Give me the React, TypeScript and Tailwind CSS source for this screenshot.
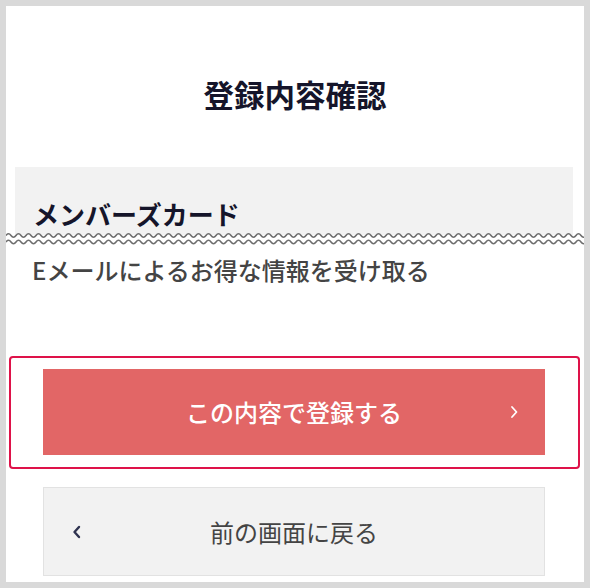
import React from 'react';

const WAVE_W = 578;

// 波線: 周期10px、振幅約3px
function wavePath(y: number, amp: number, period: number): string {
  const half = period / 2;
  let d = `M0 ${y} Q ${half / 2} ${y - amp} ${half} ${y}`;
  for (let x = half * 2; x <= WAVE_W + period; x += half) {
    d += ` T ${x} ${y}`;
  }
  return d;
}

function Wave() {
  const top = wavePath(6.5, 3.4, 10);
  const bottom = wavePath(13, 3.4, 10);
  return (
    <svg width={WAVE_W} height={20} viewBox={`0 0 ${WAVE_W} 20`} className="block -mt-[6px]" aria-hidden="true">
      <path d={`${top} L ${WAVE_W + 10} 20 L 0 20 Z`} fill="#ffffff" />
      <path d={top} fill="none" stroke="#6e6e6e" strokeWidth={1.6} />
      <path d={bottom} fill="none" stroke="#6e6e6e" strokeWidth={1.6} />
    </svg>
  );
}

function ChevronRight() {
  return (
    <svg width="10" height="14" viewBox="0 0 10 14" aria-hidden="true">
      <polyline points="3,2 7.5,7 3,12" fill="none" stroke="#ffffff" strokeWidth={1.8} strokeLinecap="round" strokeLinejoin="round" />
    </svg>
  );
}

function ChevronLeft() {
  return (
    <svg width="10" height="14" viewBox="0 0 10 14" aria-hidden="true">
      <polyline points="7,2 2.5,7 7,12" fill="none" stroke="#2f3350" strokeWidth={2.4} strokeLinecap="round" strokeLinejoin="round" />
    </svg>
  );
}

export default function App() {
  return (
    <div className="w-[590px] h-[588px] bg-[#d9d9d9] p-[6px] font-['Noto_Sans_CJK_JP','Noto_Sans',sans-serif]">
      <div className="h-full bg-white flex flex-col">
        {/* タイトル */}
        <h1 className="pt-[68px] text-center text-[30.5px] leading-[40px] font-bold text-[#15152a]">
          登録内容確認
        </h1>

        {/* メンバーズカード */}
        <div className="mt-[53px] ml-[9px] mr-[11px] h-[68px] bg-[#f2f2f2] pt-[32px] pl-[18px]">
          <p className="text-[26px] leading-[30px] font-bold text-[#15152a]">メンバーズカード</p>
        </div>
        <Wave />

        <p className="mt-[3px] pl-[26px] text-[24px] leading-[36px] font-medium text-[#444444]">
          Eメールによるお得な情報を受け取る
        </p>

        {/* 登録ボタン */}
        <div className="mt-[68px] ml-[3px] mr-[4px] border-2 border-[#de1249] rounded-[4px] pt-[11px] pb-[12px] pl-[32px] pr-[33px]">
          <button
            type="button"
            className="w-full h-[86px] bg-[#e26666] grid grid-cols-[62px_1fr_62px] items-center text-white"
          >
            <span />
            <span className="text-[24px] leading-[32px] font-medium">この内容で登録する</span>
            <span className="flex justify-center">
              <ChevronRight />
            </span>
          </button>
        </div>

        {/* 戻るボタン */}
        <div className="mt-[18px] pl-[37px] pr-[39px]">
          <button
            type="button"
            className="w-full h-[89px] bg-[#f2f2f2] border border-[#e2e2e2] grid grid-cols-[66px_1fr_66px] items-center"
          >
            <span className="flex justify-center">
              <ChevronLeft />
            </span>
            <span className="text-[24px] leading-[32px] text-[#444444]">前の画面に戻る</span>
            <span />
          </button>
        </div>
      </div>
    </div>
  );
}
